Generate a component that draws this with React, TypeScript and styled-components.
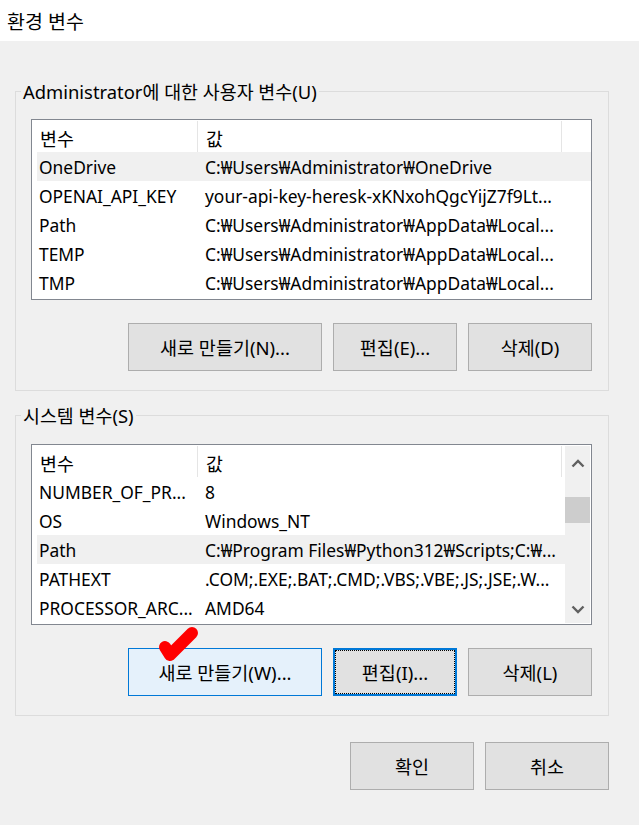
import React from 'react';
import styled, { createGlobalStyle, css } from 'styled-components';

const Global = createGlobalStyle`
  html, body { margin: 0; padding: 0; background: #f0f0f0; }
  body {
    font-family: "Noto Sans", "Noto Sans CJK KR", sans-serif;
    font-size: 18px;
    color: #000;
  }
  * { box-sizing: border-box; }
`;

const Window = styled.div`
  width: 639px;
  height: 825px;
  background: #f0f0f0;
  display: flex;
  flex-direction: column;
  overflow: hidden;
`;

const TitleBar = styled.div`
  height: 41px;
  flex-shrink: 0;
  background: #fff;
  display: flex;
  align-items: center;
  padding-left: 7px;
  font-size: 19.5px;
`;

const Body = styled.div`
  padding: 50px 30px 0 15px;
  display: flex;
  flex-direction: column;
`;

const Group = styled.div<{ $top: number; $gap: number }>`
  position: relative;
  border: 1px solid #dcdcdc;
  margin-top: ${(p) => p.$gap}px;
  padding: ${(p) => p.$top}px 16px 19px 15px;
  display: flex;
  flex-direction: column;
`;

const Legend = styled.span`
  position: absolute;
  top: -12px;
  left: 5px;
  padding: 0 2px;
  font-size: 18.4px;
  line-height: 24px;
  background: #f0f0f0;
  white-space: nowrap;
`;

const ListView = styled.div`
  height: 181px;
  border: 1px solid #828790;
  background: #fff;
  display: flex;
`;

const ListBody = styled.div`
  flex: 1;
  padding: 1px 0 0 5px;
  display: flex;
  flex-direction: column;
  overflow: hidden;
`;

const HeaderRow = styled.div`
  display: grid;
  grid-template-columns: 161px 364px;
  height: 31px;
  flex-shrink: 0;
`;

const HeaderCell = styled.div<{ $pad: number }>`
  display: flex;
  align-items: center;
  padding-left: ${(p) => p.$pad}px;
  padding-top: 3px;
  font-size: 18.4px;
  border-right: 1px solid #e5e5e5;
  white-space: nowrap;
`;

const Row = styled.div<{ $sel?: boolean }>`
  display: grid;
  grid-template-columns: 161px 364px;
  height: 29px;
  flex-shrink: 0;
  align-items: center;
  background: ${(p) => (p.$sel ? '#f0f0f0' : 'transparent')};
`;

const Cell = styled.div<{ $pad: number }>`
  padding-left: ${(p) => p.$pad}px;
  padding-top: 2px;
  font-size: 17.4px;
  white-space: nowrap;
  overflow: hidden;
  line-height: 27px;
`;

const ScrollBar = styled.div`
  width: 25px;
  margin: 1px 1px 1px 0;
  background: #f0f0f0;
  display: flex;
  flex-direction: column;
  align-items: stretch;
`;

const ScrollArrow = styled.div<{ $h: number }>`
  height: ${(p) => p.$h}px;
  display: flex;
  align-items: center;
  justify-content: center;
  flex-shrink: 0;
`;

const Thumb = styled.div`
  height: 26px;
  margin-top: 17px;
  background: #cdcdcd;
  flex-shrink: 0;
`;

const Track = styled.div`
  flex: 1;
`;

const ButtonRow = styled.div<{ $mt: number }>`
  display: flex;
  justify-content: flex-end;
  gap: 11px;
  margin-top: ${(p) => p.$mt}px;
`;

type BtnState = 'normal' | 'hover' | 'focus';

const Button = styled.button<{ $w: number; $state?: BtnState }>`
  position: relative;
  width: ${(p) => p.$w}px;
  height: 48px;
  padding: 0;
  font-family: inherit;
  font-size: 18.5px;
  color: #000;
  background: #e1e1e1;
  border: 1px solid #adadad;
  display: flex;
  align-items: center;
  justify-content: center;
  white-space: nowrap;
  ${(p) =>
    p.$state === 'hover' &&
    css`
      background: #e5f1fb;
      border-color: #0078d7;
    `}
  ${(p) =>
    p.$state === 'focus' &&
    css`
      border: 2px solid #0078d7;
      outline: 1px dotted #000;
      outline-offset: -3px;
    `}
`;

const CheckMark = styled.svg`
  position: absolute;
  left: 23px;
  top: -28px;
  width: 50px;
  height: 44px;
  pointer-events: none;
  overflow: visible;
`;

const Footer = styled.div`
  display: flex;
  justify-content: flex-end;
  gap: 11px;
  margin-top: 26px;
`;

type Item = { name: string; value: string; sel?: boolean };

const userVars: Item[] = [
  { name: 'OneDrive', value: 'C:₩Users₩Administrator₩OneDrive', sel: true },
  { name: 'OPENAI_API_KEY', value: 'your-api-key-heresk-xKNxohQgcYijZ7f9Lt...' },
  { name: 'Path', value: 'C:₩Users₩Administrator₩AppData₩Local...' },
  { name: 'TEMP', value: 'C:₩Users₩Administrator₩AppData₩Local...' },
  { name: 'TMP', value: 'C:₩Users₩Administrator₩AppData₩Local...' },
];

const sysVars: Item[] = [
  { name: 'NUMBER_OF_PR...', value: '8' },
  { name: 'OS', value: 'Windows_NT' },
  { name: 'Path', value: 'C:₩Program Files₩Python312₩Scripts;C:₩...', sel: true },
  { name: 'PATHEXT', value: '.COM;.EXE;.BAT;.CMD;.VBS;.VBE;.JS;.JSE;.W...' },
  { name: 'PROCESSOR_ARC...', value: 'AMD64' },
];

const Chevron = ({ up }: { up?: boolean }) => (
  <svg width="14" height="9" viewBox="0 0 14 9">
    <path
      d={up ? 'M1.5 7.5 L7 2 L12.5 7.5' : 'M1.5 1.5 L7 7 L12.5 1.5'}
      fill="none"
      stroke="#606060"
      strokeWidth="2.4"
    />
  </svg>
);

const List = ({ items, scroll }: { items: Item[]; scroll?: boolean }) => (
  <ListView>
    <ListBody>
      <HeaderRow>
        <HeaderCell $pad={3}>변수</HeaderCell>
        <HeaderCell $pad={8}>값</HeaderCell>
      </HeaderRow>
      {items.map((it, i) => (
        <Row key={i} $sel={it.sel}>
          <Cell $pad={2}>{it.name}</Cell>
          <Cell $pad={7}>{it.value}</Cell>
        </Row>
      ))}
    </ListBody>
    {scroll && (
      <ScrollBar>
        <ScrollArrow $h={34}>
          <Chevron up />
        </ScrollArrow>
        <Thumb />
        <Track />
        <ScrollArrow $h={27}>
          <Chevron />
        </ScrollArrow>
      </ScrollBar>
    )}
  </ListView>
);

export default function App() {
  return (
    <>
      <Global />
      <Window>
        <TitleBar>환경 변수</TitleBar>
        <Body>
          <Group $top={27} $gap={0}>
            <Legend>Administrator에 대한 사용자 변수(U)</Legend>
            <List items={userVars} />
            <ButtonRow $mt={23}>
              <Button $w={194}>새로 만들기(N)...</Button>
              <Button $w={124}>편집(E)...</Button>
              <Button $w={124}>삭제(D)</Button>
            </ButtonRow>
          </Group>
          <Group $top={28} $gap={24}>
            <Legend>시스템 변수(S)</Legend>
            <List items={sysVars} scroll />
            <ButtonRow $mt={23}>
              <Button $w={194} $state="hover">
                새로 만들기(W)...
                <CheckMark viewBox="0 0 50 44">
                  <path
                    d="M13 26 L18 34 L40 12"
                    fill="none"
                    stroke="#ff0000"
                    strokeWidth="12"
                    strokeLinecap="round"
                    strokeLinejoin="round"
                  />
                </CheckMark>
              </Button>
              <Button $w={124} $state="focus">편집(I)...</Button>
              <Button $w={124}>삭제(L)</Button>
            </ButtonRow>
          </Group>
          <Footer>
            <Button $w={124}>확인</Button>
            <Button $w={124}>취소</Button>
          </Footer>
        </Body>
      </Window>
    </>
  );
}
